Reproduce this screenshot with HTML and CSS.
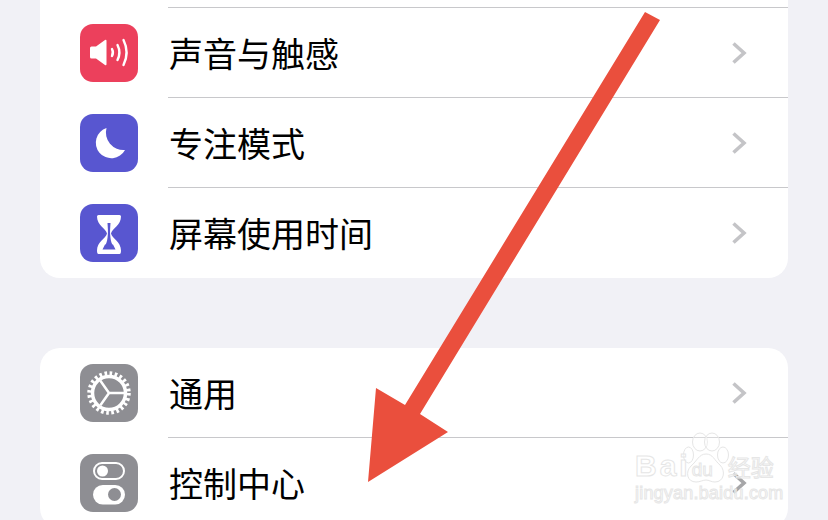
FILE: index.html
```html
<!DOCTYPE html>
<html lang="zh-CN">
<head>
  <meta charset="UTF-8">
  <title>设置</title>
  <link rel="stylesheet" href="styles.css">
</head>
<body>
  <div class="screen">
    <div class="card card-top">
      <div class="row row-cut">
        <div class="row-body"></div>
      </div>
      <div class="row">
        <svg class="icon" viewBox="0 0 58 58">
          <rect width="58" height="58" rx="13" fill="#ec405c"/>
          <path d="M11.500 22.500h4.500l9-6.500q1.500-1 1.500 1v23q0 2-1.500 1l-9-6.500h-4.500q-1.500 0-1.500-1.500v-9q0-1.500 1.500-1.500z" fill="#fff"/>
          <g fill="none" stroke="#fff" stroke-width="2.400" stroke-linecap="round">
            <path d="M32 25q1.800 3.500 0 7"/>
            <path d="M37.500 21q3.800 7.500 0 15"/>
            <path d="M43.500 16q6.200 12.500 0 25"/>
          </g>
        </svg>
        <div class="row-body">
          <span class="label">声音与触感</span>
          <svg class="chevron" viewBox="0 0 16 24"><path d="M2.500 2.500 13 12 2.500 21.500"/></svg>
        </div>
      </div>
      <div class="row">
        <svg class="icon" viewBox="0 0 58 58">
          <rect width="58" height="58" rx="13" fill="#5856d0"/>
          <path d="M26.500 14a15.500 15.500 0 1 0 18.500 22a17.500 17.500 0 0 1-18.500-22z" fill="#fff"/>
        </svg>
        <div class="row-body">
          <span class="label">专注模式</span>
          <svg class="chevron" viewBox="0 0 16 24"><path d="M2.500 2.500 13 12 2.500 21.500"/></svg>
        </div>
      </div>
      <div class="row">
        <svg class="icon" viewBox="0 0 58 58">
          <rect width="58" height="58" rx="13" fill="#5856d0"/>
          <path d="M18.500 11h21q1.500 0 1.500 1.500c0 9-9 12-10 17c1 5 10 8 10 17q0 3.500-1.500 3.500h-21q-1.500 0-1.500-3.500c0-9 9-12 10-17c-1-5-10-8-10-17q0-1.500 1.500-1.500z" fill="#fff"/>
          <path d="M27.500 19h3c-.3 5-.7 9-.3 12c.3 4 .8 7 2.300 10h-7c1.500-3 2-6 2.300-10c.4-3 0-7-.3-12z" fill="#5856d0"/>
          <path d="M25 40.500h8l2.500 5h-13z" fill="#5856d0"/>
        </svg>
        <div class="row-body row-last">
          <span class="label">屏幕使用时间</span>
          <svg class="chevron" viewBox="0 0 16 24"><path d="M2.500 2.500 13 12 2.500 21.500"/></svg>
        </div>
      </div>
    </div>

    <div class="card">
      <div class="row">
        <svg class="icon" viewBox="0 0 58 58">
          <rect width="58" height="58" rx="13" fill="#8e8e93"/>
          <circle cx="29" cy="29" r="16.500" fill="none" stroke="#fff" stroke-width="3.500"/>
          <circle cx="29" cy="29" r="19.500" fill="none" stroke="#fff" stroke-width="4.500" stroke-dasharray="2.600 2.505"/>
          <path d="M29 29H44M29 29 20.400 16.700M29 29 20.400 41.300" fill="none" stroke="#fff" stroke-width="2.500"/>
        </svg>
        <div class="row-body">
          <span class="label">通用</span>
          <svg class="chevron" viewBox="0 0 16 24"><path d="M2.500 2.500 13 12 2.500 21.500"/></svg>
        </div>
      </div>
      <div class="row">
        <svg class="icon" viewBox="0 0 58 58">
          <rect width="58" height="58" rx="13" fill="#8e8e93"/>
          <rect x="14" y="9" width="30" height="16" rx="8" fill="none" stroke="#fff" stroke-width="2"/>
          <circle cx="22.500" cy="17" r="5.500" fill="#fff"/>
          <rect x="13" y="31" width="32" height="19.500" rx="9.750" fill="#fff"/>
          <circle cx="34.500" cy="40.500" r="6.500" fill="#8e8e93"/>
        </svg>
        <div class="row-body">
          <span class="label">控制中心</span>
          <svg class="chevron chevron-marked" viewBox="0 0 16 24"><path d="M2.500 2.500 13 12 2.500 21.500"/></svg>
        </div>
      </div>
    </div>

    <svg class="arrow" viewBox="0 0 828 520">
      <polygon points="645,12 660,20 420,414 448,432 368,482 376,388 405,405"/>
    </svg>

    <div class="watermark">
      <svg class="paw" viewBox="0 0 50 56">
        <ellipse cx="17" cy="11" rx="7.500" ry="9"/>
        <ellipse cx="29" cy="11" rx="7.500" ry="9"/>
        <ellipse cx="5.500" cy="24" rx="5" ry="8"/>
        <ellipse cx="40" cy="24" rx="5.500" ry="8"/>
        <path d="M23 23c7 0 8 6 14 11c6 6 4 17-5 17c-4 0-6-2-9-2s-6 2-10 2c-9 0-11-10-5-16c6-5 8-12 15-12z"/>
      </svg>
      <div class="mark-top">
        <span class="mark-baidu">Bai</span>
        <span class="mark-du">du</span>
        <span class="mark-cn">经验</span>
      </div>
      <div class="mark-url">jingyan.baidu.com</div>
    </div>
  </div>
</body>
</html>
```

FILE: styles.css
```css
body {
  margin: 0;
  background: #f1f1f6;
  color: #000;
  font-family: "Noto Sans CJK SC", "Noto Sans", sans-serif;
}
.screen {
  position: relative;
  height: 520px;
  overflow: hidden;
}
.card {
  margin: 0 40px 70px 40px;
  background: #fff;
  border-radius: 20px;
}
.card-top {
  margin-top: -82px;
}
.row {
  display: flex;
  height: 90px;
}
.icon {
  flex: none;
  width: 58px;
  height: 58px;
  margin: 16px 30px 16px 40px;
}
.row-cut {
  padding-left: 128px;
}
.row-body {
  flex: 1;
  display: flex;
  align-items: center;
  justify-content: space-between;
  border-bottom: 1px solid #c8c8cb;
  padding: 0 41px 0 1px;
}
.row-last {
  border-bottom: none;
}
.label {
  font-size: 34px;
  line-height: 48px;
}
.chevron {
  width: 16px;
  height: 24px;
  fill: none;
  stroke: #c4c4c7;
  stroke-width: 3.6;
}
.chevron-marked {
  stroke: #a6a6a8;
}
.arrow {
  position: absolute;
  top: 0;
  left: 0;
  width: 828px;
  height: 520px;
  fill: #ea4f3d;
}
.watermark {
  position: absolute;
  top: 450px;
  left: 635px;
  width: 150px;
  font-family: "Liberation Sans", sans-serif;
  color: rgba(255, 255, 255, 0.5);
  -webkit-text-stroke: 1px #e6e6e6;
}
.paw {
  position: absolute;
  top: -19px;
  left: 48px;
  width: 50px;
  height: 56px;
  fill: rgba(255, 255, 255, 0.3);
  stroke: #e6e6e6;
  stroke-width: 1;
}
.mark-top {
  position: relative;
  display: flex;
  align-items: center;
  height: 32px;
}
.mark-baidu {
  font-size: 30px;
  font-weight: bold;
  letter-spacing: 3px;
}
.mark-du {
  font-size: 19px;
  margin-left: 1px;
  padding-top: 8px;
}
.mark-cn {
  font-family: "Noto Sans CJK SC", sans-serif;
  font-size: 23px;
  margin-left: 15px;
}
.mark-url {
  font-size: 18px;
  line-height: 22px;
  letter-spacing: 0.2px;
  white-space: nowrap;
}
```
